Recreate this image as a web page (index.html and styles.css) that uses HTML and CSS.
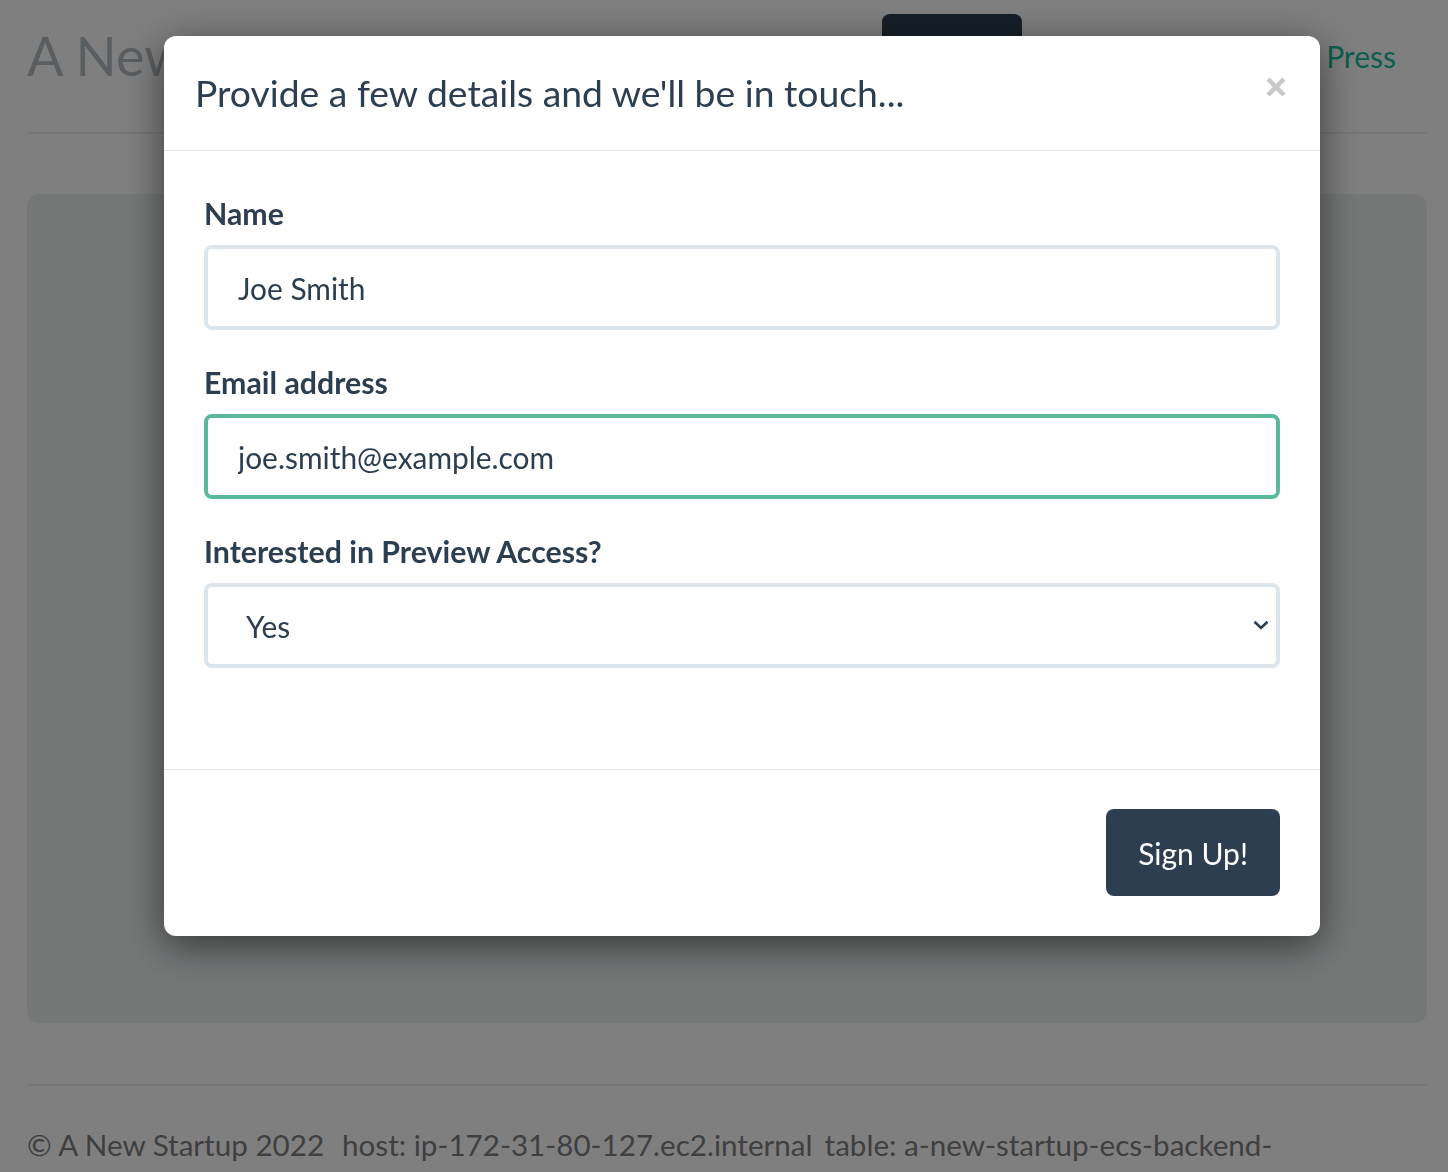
FILE: index.html
```html
<!DOCTYPE html>
<html lang="en">
<head>
<meta charset="utf-8">
<title>A New Startup</title>
<link rel="stylesheet" href="styles.css">
</head>
<body>
<div class="page">
  <header class="masthead">
    <h3 class="brand">A New Startup</h3>
    <nav class="nav">
      <a class="nav-link nav-active" href="#">Home</a>
      <a class="nav-link nav-spacer" href="#">About</a>
      <a class="nav-link nav-last" href="#">Press</a>
    </nav>
  </header>
  <hr class="rule">
  <div class="jumbotron"></div>
  <hr class="rule rule-bottom">
  <footer class="site-footer">
    <span class="foot-item">© A New Startup 2022</span>
    <span class="foot-item">host: ip-172-31-80-127.ec2.internal</span>
    <span class="foot-item">table: a-new-startup-ecs-backend-</span>
  </footer>
</div>

<div class="backdrop"></div>

<div class="modal">
  <div class="dialog">
    <div class="dialog-header">
      <h4 class="dialog-title">Provide a few details and we'll be in touch...</h4>
      <button class="close" type="button" aria-label="Close">
        <svg width="22" height="22" viewBox="0 0 22 22"><path d="M3 3 L19 19 M19 3 L3 19" stroke="#c9c9c9" stroke-width="4.5" stroke-linecap="butt"/></svg>
      </button>
    </div>
    <div class="dialog-body">
      <div class="form-group">
        <label class="field-label" for="name">Name</label>
        <input class="field" id="name" type="text" value="Joe Smith">
      </div>
      <div class="form-group">
        <label class="field-label" for="email">Email address</label>
        <input class="field field-focus" id="email" type="email" value="joe.smith@example.com">
      </div>
      <div class="form-group">
        <label class="field-label" for="preview">Interested in Preview Access?</label>
        <div class="select-wrap">
          <select class="field field-select" id="preview">
            <option>Yes</option>
            <option>No</option>
          </select>
          <svg class="chevron" width="16" height="10" viewBox="0 0 16 10"><path d="M1.5 1.8 L8 8 L14.5 1.8" fill="none" stroke="#2c3e50" stroke-width="2.6"/></svg>
        </div>
      </div>
    </div>
    <div class="dialog-footer">
      <button class="btn-primary" type="button">Sign Up!</button>
    </div>
  </div>
</div>
</body>
</html>
```
FILE: styles.css
```css
* { box-sizing: border-box; }

html, body {
  margin: 0;
  padding: 0;
  height: 100%;
  overflow: hidden;
}

body {
  background: #ffffff;
  font-family: Lato, "Open Sans", "Liberation Sans", sans-serif;
  color: #2c3e50;
}

.page {
  width: 1400px;
  margin-left: 27px;
}

.masthead {
  display: flex;
  justify-content: space-between;
  align-items: flex-start;
  height: 132px;
  padding-top: 14px;
}

.brand {
  margin: 12px 0 0 0;
  font-size: 54px;
  line-height: 60px;
  font-weight: 400;
  color: #b4bcc2;
}

.nav {
  display: flex;
  align-items: flex-start;
}

.nav-link {
  display: block;
  height: 82px;
  padding: 0 30px;
  font-size: 30px;
  line-height: 84px;
  color: #18bc9c;
  text-decoration: none;
}

.nav-active {
  width: 140px;
  background: #2c3e50;
  color: #ffffff;
  border-radius: 8px;
}

.nav-spacer {
  width: 274px;
}

.nav-last {
  padding-right: 31px;
}

.rule {
  margin: 0;
  border: 0;
  border-top: 2px solid #eeeeee;
}

.jumbotron {
  margin-top: 60px;
  height: 829px;
  background: #ecf0f1;
  border-radius: 12px;
}

.rule-bottom {
  margin-top: 61px;
}

.site-footer {
  display: flex;
  padding-top: 39px;
  font-size: 29.6px;
  line-height: 40px;
  color: #7e7e7e;
  white-space: nowrap;
}

.foot-item { margin-right: 18px; }
.foot-item + .foot-item { margin-right: 12px; }

.backdrop {
  position: fixed;
  inset: 0;
  background: rgba(0, 0, 0, 0.5);
}

.modal {
  position: fixed;
  inset: 0;
  padding: 36px 0 0 164px;
}

.dialog {
  width: 1156px;
  background: #ffffff;
  border-radius: 12px;
  box-shadow: 0 10px 40px rgba(0, 0, 0, 0.55);
}

.dialog-header {
  display: flex;
  justify-content: space-between;
  align-items: flex-start;
  padding: 30px 33px 30px 31px;
  border-bottom: 1px solid #e5e5e5;
}

.dialog-title {
  margin: 0;
  font-size: 37.3px;
  line-height: 54px;
  font-weight: 400;
  color: #2c3e50;
}

.close {
  margin-top: 10px;
  padding: 0;
  border: 0;
  background: transparent;
  line-height: 0;
}

.dialog-body {
  padding: 42px 40px 69px 40px;
}

.form-group {
  margin-bottom: 32px;
}

.field-label {
  display: block;
  margin-bottom: 11px;
  font-size: 30.3px;
  line-height: 41px;
  font-weight: 700;
  color: #2c3e50;
}

.field {
  display: block;
  width: 100%;
  height: 85px;
  padding: 0 30px;
  border: 4px solid #dce4ec;
  border-radius: 8px;
  background: #ffffff;
  font-family: Lato, "Open Sans", "Liberation Sans", sans-serif;
  font-size: 29.9px;
  color: #2c3e50;
  outline: none;
}

.field-focus {
  border-color: #5bb99b;
}

.select-wrap {
  position: relative;
}

.field-select {
  -webkit-appearance: none;
  appearance: none;
  padding-left: 38px;
}

.chevron {
  position: absolute;
  top: 37px;
  right: 11px;
}

.dialog-footer {
  display: flex;
  justify-content: flex-end;
  padding: 39px 40px 40px 40px;
  border-top: 1px solid #e5e5e5;
}

.btn-primary {
  height: 87px;
  padding: 0 32px;
  border: 0;
  border-radius: 8px;
  background: #2c3e50;
  color: #ffffff;
  font-family: Lato, "Open Sans", "Liberation Sans", sans-serif;
  font-size: 30px;
}
```
